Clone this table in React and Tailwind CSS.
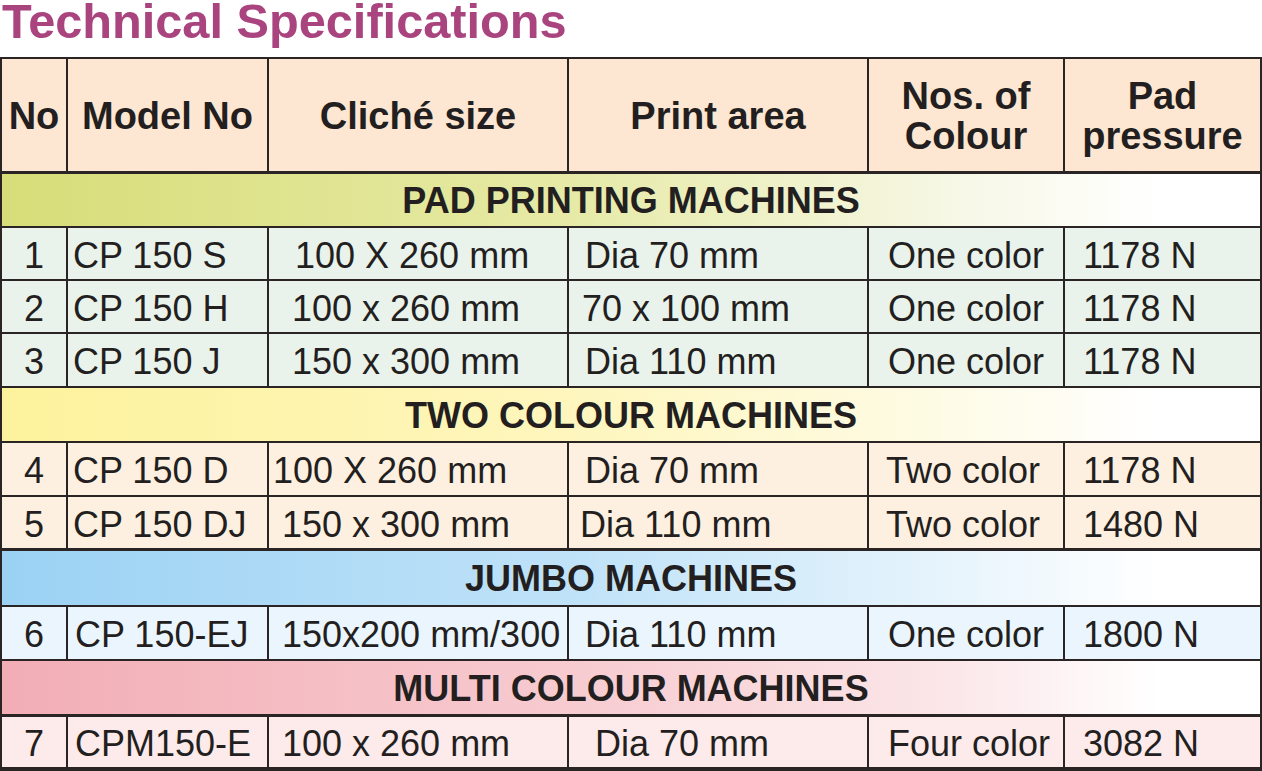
const FONT = { fontFamily: '"Liberation Sans", Arial, sans-serif' };

const COLS = 'grid grid-cols-[66px_201px_300px_300px_196px_195px]';

const GROUPS = [
  {
    title: 'PAD PRINTING MACHINES',
    head: 'h-[54px] border-b-2 bg-[linear-gradient(90deg,#d7dd78_0%,#e6eaa6_45%,#f6f7e4_75%,#ffffff_92%)]',
    row: 'bg-[#e9f2eb]',
    rows: [
      { no: '1', h: 'h-[53px]', model: 'CP 150 S', mp: 'pl-[5px]', size: '100 X 260 mm', sp: 'pl-[26px]', area: 'Dia 70 mm', ap: 'pl-[16px]', col: 'One color', cp: 'pl-[19px]', pr: '1178 N' },
      { no: '2', h: 'h-[53px]', model: 'CP 150 H', mp: 'pl-[5px]', size: '100 x 260 mm', sp: 'pl-[23px]', area: '70 x 100 mm', ap: 'pl-[13px]', col: 'One color', cp: 'pl-[19px]', pr: '1178 N' },
      { no: '3', h: 'h-[54px]', model: 'CP 150 J', mp: 'pl-[5px]', size: '150 x 300 mm', sp: 'pl-[23px]', area: 'Dia 110 mm', ap: 'pl-[16px]', col: 'One color', cp: 'pl-[19px]', pr: '1178 N' },
    ],
  },
  {
    title: 'TWO COLOUR MACHINES',
    head: 'h-[55px] border-b-2 bg-[linear-gradient(90deg,#fdf29c_0%,#fef6bd_45%,#fefbe6_75%,#ffffff_92%)]',
    row: 'bg-[#fdf0e1]',
    rows: [
      { no: '4', h: 'h-[54px]', model: 'CP 150 D', mp: 'pl-[5px]', size: '100 X 260 mm', sp: 'pl-[4px]', area: 'Dia 70 mm', ap: 'pl-[16px]', col: 'Two color', cp: 'pl-[17px]', pr: '1178 N' },
      { no: '5', h: 'h-[54px] border-b-[3px]', model: 'CP 150 DJ', mp: 'pl-[5px]', size: '150 x 300 mm', sp: 'pl-[13px]', area: 'Dia 110 mm', ap: 'pl-[11px]', col: 'Two color', cp: 'pl-[17px]', pr: '1480 N' },
    ],
  },
  {
    title: 'JUMBO MACHINES',
    head: 'h-[56px] border-b-2 bg-[linear-gradient(90deg,#9bd2f4_0%,#bfe2f8_45%,#e6f4fc_75%,#ffffff_92%)]',
    row: 'bg-[#ebf5fd]',
    rows: [
      { no: '6', h: 'h-[54px]', model: 'CP 150-EJ', mp: 'pl-[7px]', size: '150x200 mm/300', sp: 'pl-[13px]', area: 'Dia 110 mm', ap: 'pl-[16px]', col: 'One color', cp: 'pl-[19px]', pr: '1800 N' },
    ],
  },
  {
    title: 'MULTI COLOUR MACHINES',
    head: 'h-[56px] border-b-[3px] bg-[linear-gradient(90deg,#f2adb5_0%,#f7cbd0_45%,#fbe6e8_75%,#ffffff_92%)]',
    row: 'bg-[#fdeaea]',
    rows: [
      { no: '7', h: 'h-[52px] border-b-0', model: 'CPM150-E', mp: 'pl-[7px]', size: '100 x 260 mm', sp: 'pl-[13px]', area: 'Dia 70 mm', ap: 'pl-[26px]', col: 'Four color', cp: 'pl-[19px]', pr: '3082 N' },
    ],
  },
];

function Row({ r, bg }) {
  const cell = 'flex items-center pt-[4px] border-r-2 border-[#2a2424] whitespace-nowrap';
  return (
    <div className={`${COLS} ${bg} ${r.h} border-b-2 border-[#2a2424] text-[36px] leading-none text-[#231f20]`}>
      <div className={`${cell} justify-center`}>{r.no}</div>
      <div className={`${cell} ${r.mp}`}>{r.model}</div>
      <div className={`${cell} ${r.sp}`}>{r.size}</div>
      <div className={`${cell} ${r.ap}`}>{r.area}</div>
      <div className={`${cell} ${r.cp}`}>{r.col}</div>
      <div className="flex items-center pt-[4px] pl-[18px] whitespace-nowrap">{r.pr}</div>
    </div>
  );
}

export default function App() {
  const hcell = 'flex items-center justify-center text-center pt-[2px] border-r-2 border-[#2a2424]';
  return (
    <div className="w-[1262px] h-[771px] bg-white overflow-hidden" style={FONT}>
      <div className="h-[57px] pt-[1px]">
        <h1 className="text-[48.7px] leading-[41px] font-bold text-[#a9447f] pl-[2px]">
          Technical Specifications
        </h1>
      </div>

      <div className="border-2 border-[#2a2424]">
        <div className={`${COLS} h-[115px] bg-[#fde6d2] border-b-[3px] border-[#2a2424] text-[38px] font-bold text-[#231f20]`}>
          <div className={hcell}>No</div>
          <div className={hcell}>Model No</div>
          <div className={hcell}>Cliché size</div>
          <div className={hcell}>Print area</div>
          <div className={`${hcell} leading-[40px]`}>Nos. of<br />Colour</div>
          <div className="flex items-center justify-center text-center pt-[2px] leading-[40px]">Pad<br />pressure</div>
        </div>

        {GROUPS.map((g) => (
          <div key={g.title}>
            <div className={`${g.head} border-[#2a2424] flex items-center justify-center pt-[2px] text-[36px] font-bold text-[#231f20]`}>
              {g.title}
            </div>
            {g.rows.map((r) => (
              <Row key={r.no} r={r} bg={g.row} />
            ))}
          </div>
        ))}
      </div>
    </div>
  );
}
